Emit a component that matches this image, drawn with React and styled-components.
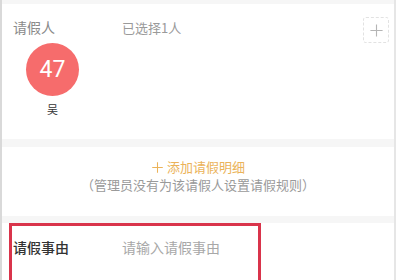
import React from "react";
import styled, { createGlobalStyle } from "styled-components";

const GlobalStyle = createGlobalStyle`
  html, body {
    margin: 0;
    padding: 0;
    background: #ffffff;
  }
  body {
    font-family: "Noto Sans CJK SC", "Noto Sans", sans-serif;
  }
`;

const Page = styled.div`
  position: relative;
  box-sizing: border-box;
  width: 396px;
  height: 280px;
  overflow: hidden;
  background: #ffffff;
  border-left: 2px solid #d9d9d9;
  border-right: 2px solid #e6e6e6;
`;

const Gap = styled.div`
  height: ${(p) => p.h}px;
  background: #f6f6f6;
`;

const Section = styled.section`
  background: #ffffff;
  height: ${(p) => p.h}px;
  box-sizing: border-box;
  padding: ${(p) => p.pad || "0"};
`;

const HeaderRow = styled.div`
  display: flex;
  align-items: flex-start;
  padding: 13px 5px 0 11px;
`;

const Label = styled.div`
  width: 109px;
  font-size: 14px;
  line-height: 21px;
  color: #8a8a8a;
`;

const Selected = styled.div`
  flex: 1;
  font-size: 13px;
  line-height: 21px;
  color: #9a9a9a;
`;

const AddBox = styled.div`
  width: 24px;
  height: 24px;
  border: 1px dashed #e2e2e2;
  border-radius: 3px;
  display: flex;
  align-items: center;
  justify-content: center;
`;

const People = styled.div`
  display: flex;
  padding-left: 24px;
`;

const Person = styled.div`
  display: flex;
  flex-direction: column;
  align-items: center;
  width: 53px;
`;

const Avatar = styled.div`
  width: 53px;
  height: 53px;
  border-radius: 50%;
  background: #f66c6c;
  color: #ffffff;
  font-family: "Roboto", "Noto Sans", sans-serif;
  font-size: 23px;
  display: flex;
  align-items: center;
  justify-content: center;
`;

const Name = styled.div`
  margin-top: 5px;
  font-size: 11px;
  line-height: 16px;
  color: #333333;
`;

const AddDetail = styled.div`
  display: flex;
  align-items: center;
  justify-content: center;
  gap: 3px;
  font-size: 13px;
  line-height: 18px;
  color: #ebb35a;
`;

const Hint = styled.div`
  text-align: center;
  font-size: 13px;
  line-height: 18px;
  color: #9a9a9a;
`;

const FieldRow = styled.div`
  display: flex;
  align-items: center;
  padding: 14px 0 0 11px;
`;

const FieldLabel = styled.div`
  width: 109px;
  font-size: 14px;
  line-height: 20px;
  font-weight: 500;
  color: #333333;
`;

const Placeholder = styled.div`
  font-size: 14px;
  line-height: 20px;
  color: #a8a8a8;
`;

const Highlight = styled.div`
  position: absolute;
  left: 7px;
  top: 223px;
  width: 246px;
  height: 70px;
  border: 3px solid #d9344b;
  pointer-events: none;
`;

const Plus = ({ size, color, width }) => (
  <svg width={size} height={size} viewBox="0 0 16 16">
    <path d="M8 1.5V14.5M1.5 8H14.5" stroke={color} strokeWidth={width} fill="none" />
  </svg>
);

export default function App() {
  return (
    <>
      <GlobalStyle />
      <Page>
        <Gap h={4} />
        <Section h={135}>
          <HeaderRow>
            <Label>请假人</Label>
            <Selected>已选择1人</Selected>
            <AddBox>
              <Plus size={15} color="#b5b5b5" width={1.2} />
            </AddBox>
          </HeaderRow>
          <People>
            <Person>
              <Avatar>47</Avatar>
              <Name>吴</Name>
            </Person>
          </People>
        </Section>
        <Gap h={8} />
        <Section h={69} pad="11px 0 0">
          <AddDetail>
            <Plus size={13} color="#ebb35a" width={1.3} />
            添加请假明细
          </AddDetail>
          <Hint>（管理员没有为该请假人设置请假规则）</Hint>
        </Section>
        <Gap h={7} />
        <Section h={57}>
          <FieldRow>
            <FieldLabel>请假事由</FieldLabel>
            <Placeholder>请输入请假事由</Placeholder>
          </FieldRow>
        </Section>
        <Highlight />
      </Page>
    </>
  );
}
